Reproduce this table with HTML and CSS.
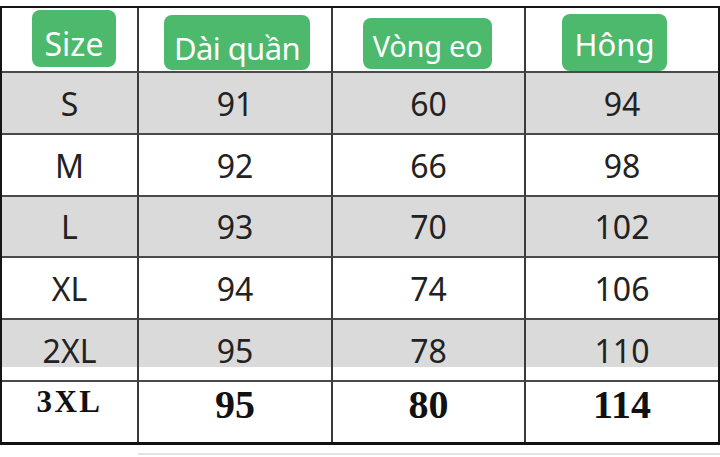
FILE: index.html
```html
<!DOCTYPE html>
<html lang="vi">
<head>
<meta charset="utf-8">
<link rel="stylesheet" href="styles.css">
</head>
<body>
<div class="sheet">
  <div class="table">
    <div class="cell head"><span class="badge b-size">Size</span></div>
    <div class="cell head"><span class="badge b-dai">Dài quần</span></div>
    <div class="cell head"><span class="badge b-vong">Vòng eo</span></div>
    <div class="cell head last"><span class="badge b-hong">Hông</span></div>

    <div class="cell grey">S</div>
    <div class="cell grey">91</div>
    <div class="cell grey">60</div>
    <div class="cell grey last">94</div>

    <div class="cell">M</div>
    <div class="cell">92</div>
    <div class="cell">66</div>
    <div class="cell last">98</div>

    <div class="cell grey">L</div>
    <div class="cell grey">93</div>
    <div class="cell grey">70</div>
    <div class="cell grey last">102</div>

    <div class="cell">XL</div>
    <div class="cell">94</div>
    <div class="cell">74</div>
    <div class="cell last">106</div>

    <div class="cell half">2XL</div>
    <div class="cell half">95</div>
    <div class="cell half">78</div>
    <div class="cell half last">110</div>

    <div class="cell bold end small">3XL</div>
    <div class="cell bold end">95</div>
    <div class="cell bold end">80</div>
    <div class="cell bold end last">114</div>
  </div>
  <div class="under"></div>
</div>
</body>
</html>
```

FILE: styles.css
```css
html, body {
  margin: 0;
  padding: 0;
  background: #ffffff;
}

.sheet {
  width: 720px;
  height: 457px;
  padding-top: 6px;
  box-sizing: border-box;
  overflow: hidden;
}

.table {
  display: grid;
  grid-template-columns: 137px 194px 193px 192px;
  grid-template-rows: 65px 62px 62px 61px 62px 62px 60px;
  border-top: 2px solid #151515;
  border-left: 2px solid #151515;
  border-right: 2px solid #151515;
  border-bottom: 3px solid #111111;
  width: 720px;
  box-sizing: border-box;
}

.cell {
  box-sizing: border-box;
  border-right: 2px solid #3a3a3a;
  border-bottom: 2px solid #4a4a4a;
  display: flex;
  align-items: center;
  justify-content: center;
  font-family: "Noto Sans", "Open Sans", sans-serif;
  font-size: 32px;
  color: #222222;
  background: #ffffff;
}

.cell.last {
  border-right: none;
}

.grey {
  background: #dadada;
}

.half {
  background: linear-gradient(#dadada 0, #dadada 47px, #ffffff 47px);
}

.end {
  border-bottom: none;
  padding-bottom: 16px;
}

.bold {
  font-family: "Liberation Serif", "Times New Roman", serif;
  font-weight: bold;
  font-size: 40px;
  color: #111111;
}

.bold.small {
  font-size: 31px;
  letter-spacing: 2.5px;
  padding-bottom: 20px;
}

.head {
  align-items: flex-start;
  justify-content: flex-start;
}

.badge {
  display: flex;
  align-items: center;
  justify-content: center;
  background: #4cb96d;
  color: #ffffff;
  border-radius: 8px;
  font-family: "Noto Sans", "Open Sans", sans-serif;
  line-height: 1;
  box-sizing: border-box;
}

.b-size {
  width: 84px;
  height: 57px;
  font-size: 32px;
  margin: 2px 0 0 30px;
  padding-top: 10px;
}

.b-dai {
  width: 146px;
  height: 55px;
  font-size: 31px;
  letter-spacing: -0.6px;
  margin: 7px 0 0 25px;
  padding-top: 12px;
}

.b-vong {
  width: 129px;
  height: 51px;
  font-size: 29px;
  letter-spacing: -0.3px;
  margin: 10px 0 0 30px;
  padding-top: 4px;
}

.b-hong {
  width: 105px;
  height: 57px;
  font-size: 31px;
  margin: 6px 0 0 36px;
  padding-top: 4px;
}

.under {
  margin: 8px 0 0 138px;
  height: 2px;
  background: #e2e2e2;
}
```
